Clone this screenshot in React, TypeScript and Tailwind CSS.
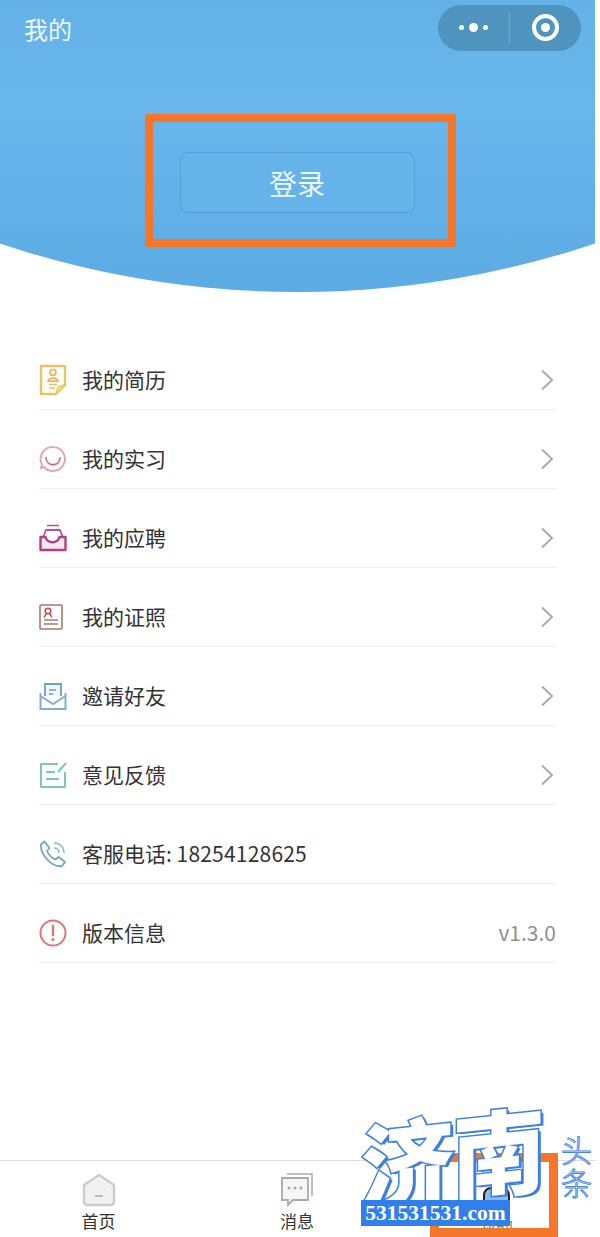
const font = "font-['Noto_Sans_CJK_SC','Noto_Sans',sans-serif]";

function ResumeIcon() {
  return (
    <svg width="28" height="32" viewBox="0 0 28 32" fill="none">
      <path d="M2 2h24v19l-9 9H2z" stroke="#e5c567" strokeWidth="2.4" strokeLinejoin="round" fill="#fffdf5" />
      <path d="M17 30c0-5 3-9 9-9z" fill="#f7e6ab" stroke="#e5c567" strokeWidth="1.5" />
      <circle cx="14" cy="8.5" r="3" stroke="#eba565" strokeWidth="1.5" />
      <path d="M9 17c1-4 9-4 10 0z" stroke="#eba565" strokeWidth="1.5" />
      <path d="M10 20.5h8M10 24h6" stroke="#e5c567" strokeWidth="1.5" />
    </svg>
  );
}

function SmileIcon() {
  return (
    <svg width="28" height="28" viewBox="0 0 28 28" fill="none">
      <path d="M14 2a12 12 0 1 1-9 20l-3 1 1-3.5A12 12 0 0 1 14 2z" stroke="#dcaab0" strokeWidth="2" />
      <path d="M7 13c1 9 13 9 14 0" stroke="#c9747d" strokeWidth="1.8" strokeLinecap="round" />
    </svg>
  );
}

function InboxIcon() {
  return (
    <svg width="28" height="28" viewBox="0 0 28 28" fill="none">
      <path d="M8 1.5h12" stroke="#b5568f" strokeWidth="1.5" />
      <path d="M4 14l3-8h14l3 8" stroke="#b5568f" strokeWidth="1.8" />
      <path d="M1.5 13v13h25V13h-6c-2 7-12 7-14 0z" stroke="#b03f86" strokeWidth="2.4" strokeLinejoin="round" fill="#f6e8f1" />
    </svg>
  );
}

function CertIcon() {
  return (
    <svg width="24" height="26" viewBox="0 0 24 26" fill="none">
      <rect x="1" y="1" width="22" height="24" rx="1" stroke="#a5786f" strokeWidth="1.6" />
      <circle cx="9" cy="7" r="2.8" stroke="#c0463f" strokeWidth="1.5" />
      <path d="M7 10l-2 3.5M11 10l2 3.5" stroke="#c0463f" strokeWidth="1.5" />
      <path d="M5 16h14M5 20h14" stroke="#a5786f" strokeWidth="1.4" />
    </svg>
  );
}

function InviteIcon() {
  return (
    <svg width="28" height="29" viewBox="0 0 28 29" fill="none">
      <path d="M6 14V2h16v12" stroke="#6f9fbe" strokeWidth="1.8" fill="#eef6fb" />
      <path d="M10 8h7M10 12h4" stroke="#6f9fbe" strokeWidth="1.4" />
      <path d="M1.5 11v16h25V11M1.5 14l12.5 8 12.5-8" stroke="#7fb0cf" strokeWidth="2" />
    </svg>
  );
}

function EditIcon() {
  return (
    <svg width="28" height="28" viewBox="0 0 28 28" fill="none">
      <path d="M19 3H2v23h24V11" stroke="#7cc6b7" strokeWidth="2" strokeLinejoin="round" />
      <path d="M7 11h9M7 18h13" stroke="#7cc6b7" strokeWidth="1.8" />
      <path d="M19 11l8-9" stroke="#7cc6b7" strokeWidth="2" />
    </svg>
  );
}

function PhoneIcon() {
  return (
    <svg width="28" height="28" viewBox="0 0 28 28" fill="none">
      <path d="M2 4.5 5.5 1.5l5 6.5-2.5 3c1.5 3.5 5 7 8.5 8.5l3-2.5 6.5 5-3 4C13 28 1 14 2 4.5z" stroke="#74a9b8" strokeWidth="1.8" strokeLinejoin="round" />
      <path d="M15 8c3 0 5 2 5 5M15 3c6 0 10 4 10 10" stroke="#8dbcc9" strokeWidth="1.5" />
    </svg>
  );
}

function InfoIcon() {
  return (
    <svg width="28" height="28" viewBox="0 0 28 28" fill="none">
      <circle cx="14" cy="14" r="12.5" stroke="#d8777c" strokeWidth="2" />
      <path d="M14 7v9" stroke="#d8777c" strokeWidth="2.5" strokeLinecap="round" />
      <circle cx="14" cy="20.5" r="1.5" fill="#d8777c" />
    </svg>
  );
}

function Chevron() {
  return (
    <svg width="14" height="22" viewBox="0 0 14 22" fill="none">
      <path d="M2 1.5 12 11 2 20.5" stroke="#ababab" strokeWidth="2" />
    </svg>
  );
}

const rows = [
  { icon: <ResumeIcon />, label: "我的简历", chevron: true },
  { icon: <SmileIcon />, label: "我的实习", chevron: true },
  { icon: <InboxIcon />, label: "我的应聘", chevron: true },
  { icon: <CertIcon />, label: "我的证照", chevron: true },
  { icon: <InviteIcon />, label: "邀请好友", chevron: true },
  { icon: <EditIcon />, label: "意见反馈", chevron: true },
  { icon: <PhoneIcon />, label: "客服电话: ", number: "18254128625" },
  { icon: <InfoIcon />, label: "版本信息", value: "v1.3.0" },
];

export default function App() {
  return (
    <div className={`${font} relative flex h-[1237px] w-[600px] flex-col overflow-hidden bg-white`}>
      <div className="relative h-[292px] w-[595px] shrink-0 overflow-hidden">
        <div className="absolute bottom-0 left-[-640px] h-[1875px] w-[1875px] rounded-[50%] bg-gradient-to-t from-[#5cabe4] via-[#68b6ec] via-[10%] to-[#63b1e7] to-[16%]" />
        <div className="relative flex h-[54px] items-center justify-between pr-[14px] pl-[24px]">
          <span className="mt-[4px] text-[24px] leading-none text-[#eef7fd]">我的</span>
          <div className="mt-[1px] flex h-[46px] w-[143px] items-center rounded-full bg-[#4f94bf]">
            <div className="flex w-[71px] items-center justify-center gap-[5px]">
              <span className="size-[5px] rounded-full bg-white" />
              <span className="size-[9px] rounded-full bg-white" />
              <span className="size-[5px] rounded-full bg-white" />
            </div>
            <div className="h-[30px] w-px bg-[#6ba9cf]" />
            <div className="flex flex-1 items-center justify-center">
              <div className="flex size-[27px] items-center justify-center rounded-full border-[4px] border-white">
                <span className="size-[9px] rounded-full bg-white" />
              </div>
            </div>
          </div>
        </div>
        <div className="relative mt-[60px] ml-[145px] flex h-[133px] w-[311px] items-center justify-center border-[8px] border-[#f5762a]">
          <div className="mt-[4px] mr-[7px] flex h-[61px] w-[235px] items-center justify-center rounded-[8px] border border-[#559fd6] bg-[#66b3ea] text-[28px] text-[#eef7fd]">
            登录
          </div>
        </div>
      </div>

      <div className="mt-[39px] flex w-[595px] flex-col px-[39px]">
        {rows.map((row) => (
          <div key={row.label} className="flex h-[79px] items-center border-b border-[#eeeeee] pt-[20px]">
            <div className="flex w-[43px] shrink-0 items-center">{row.icon}</div>
            <span className="flex-1 text-[21px] text-[#333333]">
              {row.label}
              {row.number && <span className="tracking-[0.2px]">{row.number}</span>}
            </span>
            {row.chevron && (
              <div className="mr-[2px]">
                <Chevron />
              </div>
            )}
            {row.value && <span className="text-[21px] text-[#8f8f8f]">{row.value}</span>}
          </div>
        ))}
      </div>

      <div className="absolute right-[5px] bottom-0 left-0 flex h-[77px] border-t border-[#dddddd] bg-white">
        <div className="flex w-[197px] flex-col items-center pt-[12px]">
          <svg width="34" height="34" viewBox="0 0 34 34" fill="none">
            <path d="M17 2 32 12v17a3 3 0 0 1-3 3H5a3 3 0 0 1-3-3V12z" fill="#f1f1f1" stroke="#cccccc" strokeWidth="2.4" strokeLinejoin="round" />
            <path d="M13 23h8" stroke="#aaaaaa" strokeWidth="1.5" />
          </svg>
          <span className="mt-[1px] text-[17px] leading-[26px] text-[#333333]">首页</span>
        </div>
        <div className="flex w-[200px] flex-col items-center pt-[12px]">
          <svg width="34" height="34" viewBox="0 0 34 34" fill="none">
            <path d="M7 1h25v22" stroke="#aaaaaa" strokeWidth="1.5" />
            <path d="M2 5h26v22H13l-5 5v-5H2z" fill="#f6f6f6" stroke="#aaaaaa" strokeWidth="1.8" />
            <circle cx="9" cy="15" r="1.5" fill="#aaaaaa" />
            <circle cx="15" cy="15" r="1.5" fill="#aaaaaa" />
            <circle cx="21" cy="15" r="1.5" fill="#aaaaaa" />
          </svg>
          <span className="mt-[1px] text-[17px] leading-[26px] text-[#333333]">消息</span>
        </div>
        <div className="flex flex-1 flex-col items-center pt-[12px]">
          <span className="mt-[40px] text-[17px] leading-[26px] text-[#5a9a5a]">我的</span>
        </div>
      </div>

      {/* orange highlight box round the last tab, partly under the watermark */}
      <div className="absolute bottom-0 left-[430px] h-[84px] w-[128px] border-[9px] border-[#f5762a]" />
      <div className="absolute top-[1187px] left-[483px] h-[30px] w-[27px] rounded-t-[8px] border-2 border-[#222222] bg-[#8dbcea]" />

      {/* site watermark */}
      <div className="absolute top-[1106px] left-[360px] flex -rotate-6 -skew-x-6 items-start">
        <span className="text-[94px] leading-none font-black tracking-[-2px] text-white [paint-order:stroke_fill] [text-shadow:3px_2px_0_#3f7fe0] [-webkit-text-stroke:3px_#3f7fe0]">
          济南
        </span>
      </div>
      <div className="absolute top-[1132px] left-[561px] flex flex-col text-[31px] leading-[33px] font-light text-white [-webkit-text-stroke:1px_#4a86e0]">
        <span>头</span>
        <span>条</span>
      </div>
      <div className="absolute top-[1200px] left-[361px] flex h-[26px] w-[149px] items-center justify-center bg-[#2f80ed] font-['Liberation_Serif',serif] text-[21.5px] font-bold text-white">
        531531531.com
      </div>
    </div>
  );
}
